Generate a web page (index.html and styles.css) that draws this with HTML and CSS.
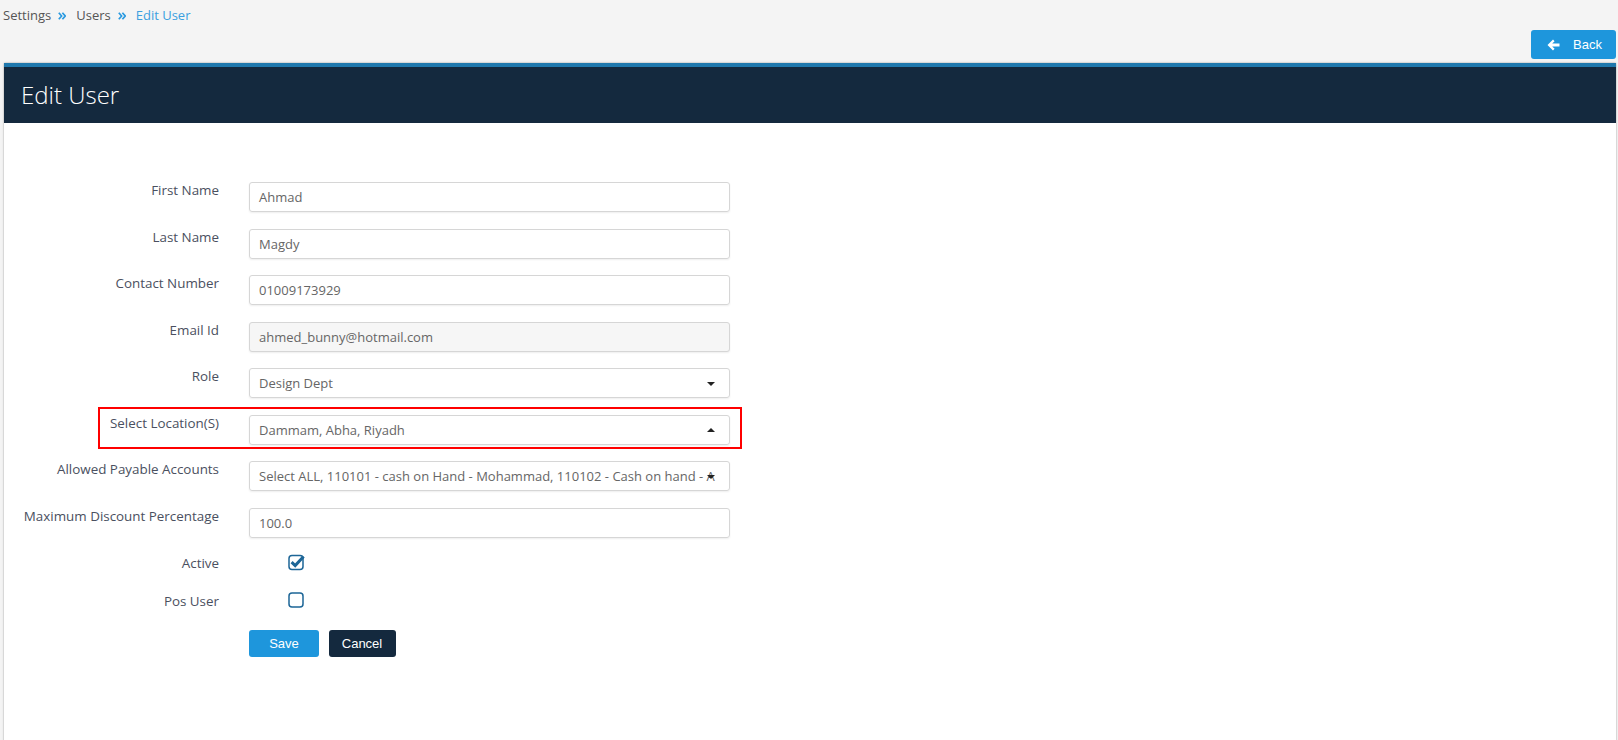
FILE: index.html
```html
<!DOCTYPE html>
<html>
<head>
<meta charset="utf-8">
<title>Edit User</title>
<link rel="stylesheet" href="styles.css">
</head>
<body>
<div class="breadcrumb">
  <span class="crumb">Settings</span>
  <svg class="sep" width="8" height="8" viewBox="0 0 8 8"><polyline points="0.8,0.8 3.6,4 0.8,7.2" /><polyline points="4.4,0.8 7.2,4 4.4,7.2" /></svg>
  <span class="crumb">Users</span>
  <svg class="sep" width="8" height="8" viewBox="0 0 8 8"><polyline points="0.8,0.8 3.6,4 0.8,7.2" /><polyline points="4.4,0.8 7.2,4 4.4,7.2" /></svg>
  <span class="crumb current">Edit User</span>
</div>
<div class="toolbar">
  <button class="btn btn-back">
    <svg width="13" height="12" viewBox="0 0 13 12"><path d="M0.5 6 L6 0.6 L7.6 2.2 L5.2 4.6 L12.5 4.6 L12.5 7.4 L5.2 7.4 L7.6 9.8 L6 11.4 Z" fill="#fff"/></svg>
    <span>Back</span>
  </button>
</div>
<div class="card">
  <div class="card-head"><h1>Edit User</h1></div>
  <div class="card-body">
    <div class="form">
      <div class="row"><div class="label">First Name</div><div class="input">Ahmad</div></div>
      <div class="row"><div class="label">Last Name</div><div class="input">Magdy</div></div>
      <div class="row"><div class="label">Contact Number</div><div class="input">01009173929</div></div>
      <div class="row"><div class="label">Email Id</div><div class="input disabled">ahmed_bunny@hotmail.com</div></div>
      <div class="row"><div class="label">Role</div><div class="input select"><span class="val">Design Dept</span><span class="caret down"></span></div></div>
      <div class="row marked"><div class="label">Select Location(S)</div><div class="input select"><span class="val">Dammam, Abha, Riyadh</span><span class="caret up"></span></div><div class="highlight"></div></div>
      <div class="row"><div class="label">Allowed Payable Accounts</div><div class="input select"><span class="val">Select ALL, 110101 - cash on Hand - Mohammad, 110102 - Cash on hand - A</span><span class="caret down"></span></div></div>
      <div class="row"><div class="label">Maximum Discount Percentage</div><div class="input">100.0</div></div>
      <div class="row check"><div class="label">Active</div><div class="cbox">
        <svg width="19" height="17" viewBox="0 0 19 17"><rect x="1" y="1.5" width="14" height="14" rx="3" fill="none" stroke="#1d6697" stroke-width="1.5"/><path d="M3.6 8.2 L7.2 11.6 L15.6 2.6" fill="none" stroke="#1d6697" stroke-width="3" stroke-linejoin="miter"/></svg>
      </div></div>
      <div class="row check"><div class="label">Pos User</div><div class="cbox">
        <svg width="19" height="17" viewBox="0 0 19 17"><rect x="1" y="1" width="14" height="14" rx="3" fill="none" stroke="#1d6697" stroke-width="1.5"/></svg>
      </div></div>
      <div class="row actions"><div class="label"></div><div class="btns"><button class="btn btn-save">Save</button><button class="btn btn-cancel">Cancel</button></div></div>
    </div>
  </div>
</div>
</body>
</html>
```
FILE: styles.css
```css
html, body {
  margin: 0;
  padding: 0;
}
body {
  background: #f4f4f4;
  font-family: "Open Sans", "Liberation Sans", sans-serif;
  font-size: 13px;
  color: #4a5060;
  padding: 0 1px 0 3px;
  height: 740px;
  overflow: hidden;
}
.breadcrumb {
  height: 30px;
  line-height: 28px;
  display: flex;
  align-items: center;
  color: #555;
}
.crumb.current { color: #3b9fe0; }
.sep {
  margin: 1px 10px 0 7px;
  fill: none;
  stroke: #2a9ae0;
  stroke-width: 1.7;
}
.toolbar {
  height: 29px;
  margin-bottom: 3px;
  display: flex;
  justify-content: flex-end;
  padding-right: 1px;
}
.btn {
  border: 0;
  border-radius: 3px;
  color: #fff;
  font-family: "Liberation Sans", Arial, sans-serif;
  font-size: 13px;
  cursor: pointer;
  padding: 0;
}
.btn-back {
  width: 85px;
  height: 29px;
  background: #1e96dc;
  display: flex;
  align-items: center;
  padding-left: 16px;
  gap: 13px;
}
.card {
  background: #fff;
  border: 1px solid #d8d8d8;
  border-radius: 3px 3px 0 0;
  box-shadow: 0 0 2px rgba(0,0,0,0.08);
  height: 700px;
}
.card-head {
  border-top: 4px solid #1f78ad;
  background: #14293e;
  height: 56px;
  padding-left: 17px;
}
.card-head h1 {
  margin: 0;
  font-family: "Open Sans", sans-serif;
  font-weight: 300;
  font-size: 24px;
  line-height: 56px;
  color: #fff;
}
.card-body {
  padding-top: 59px;
}
.row {
  display: grid;
  grid-template-columns: 215px 481px;
  column-gap: 30px;
  margin-bottom: 16.5px;
  position: relative;
}
.label {
  text-align: right;
  line-height: 16px;
  font-size: 13.4px;
  color: #4a5060;
}
.input {
  height: 30px;
  box-sizing: border-box;
  border: 1px solid #d6d6d6;
  border-radius: 3px;
  box-shadow: 0 1px 2px rgba(0,0,0,0.07);
  padding: 0 9px;
  line-height: 28px;
  color: #666;
  position: relative;
  white-space: nowrap;
}
.input.disabled { background: #f6f6f6; }
.caret {
  position: absolute;
  right: 14px;
  top: 13px;
  width: 0;
  height: 0;
  border-left: 4px solid transparent;
  border-right: 4px solid transparent;
}
.caret.down { border-top: 4px solid #222; }
.caret.up { border-bottom: 4px solid #222; top: 12px; }
.highlight {
  position: absolute;
  left: 94px;
  top: -7.5px;
  width: 644px;
  height: 42px;
  box-sizing: border-box;
  border: 2px solid #f00;
  pointer-events: none;
}
.row.check {
  height: 22px;
  margin-bottom: 16px;
}
.row.check .label { line-height: 18px; }
.cbox {
  padding-left: 39px;
  height: 17px;
}
.cbox svg { display: block; }
.btns {
  display: flex;
  gap: 9.5px;
}
.btn-save {
  width: 70px;
  height: 27px;
  background: #1e96dc;
}
.btn-cancel {
  width: 67px;
  height: 27px;
  background: #14293e;
}
```
